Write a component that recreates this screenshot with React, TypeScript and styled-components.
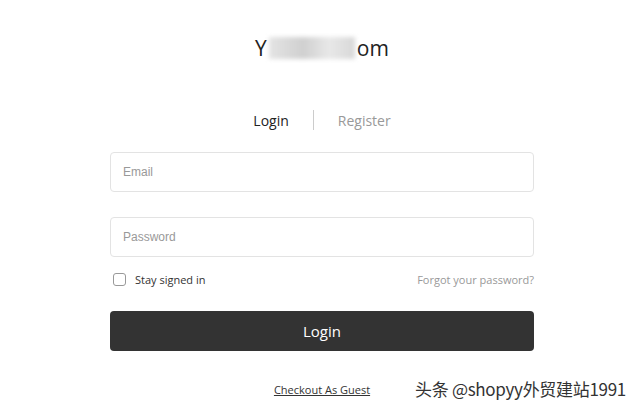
import React from "react";
import styled, { createGlobalStyle } from "styled-components";

const Global = createGlobalStyle`
  html, body { margin: 0; padding: 0; background: #fff; }
  body { font-family: "Open Sans", "Liberation Sans", sans-serif; color: #333; }
`;

const Page = styled.div`
  position: relative;
  width: 640px;
  height: 417px;
  overflow: hidden;
  display: flex;
  flex-direction: column;
  align-items: center;
  padding-left: 4px;
  box-sizing: border-box;
`;

const Title = styled.div`
  margin-top: 33px;
  height: 30px;
  display: flex;
  align-items: center;
  font-size: 21px;
  color: #222;
  font-family: "Open Sans", sans-serif;
`;

const Blur = styled.span`
  display: inline-block;
  width: 86px;
  height: 22px;
  margin: 0 2px;
  background: linear-gradient(90deg, #e4e4e4, #d0d0d0 40%, #e8e8e8 70%, #d8d8d8);
  filter: blur(2px);
`;

const Tabs = styled.div`
  margin-top: 46px;
  display: flex;
  align-items: center;
  height: 22px;
`;

const Tab = styled.span<{ $active?: boolean }>`
  font-size: 14px;
  color: ${(p) => (p.$active ? "#222" : "#999")};
`;

const Divider = styled.span`
  width: 1px;
  height: 20px;
  background: #ccc;
  margin: 0 24px;
`;

const Form = styled.div`
  width: 424px;
  margin-top: 21px;
  display: flex;
  flex-direction: column;
`;

const Input = styled.input`
  box-sizing: border-box;
  width: 100%;
  height: 40px;
  border: 1px solid #e3e3e3;
  border-radius: 4px;
  padding: 0 12px;
  font-family: "Liberation Sans", Arial, sans-serif;
  font-size: 12px;
  outline: none;
  & + & { margin-top: 25px; }
  &::placeholder { color: #999; }
`;

const Row = styled.div`
  margin-top: 14px;
  height: 16px;
  display: flex;
  justify-content: space-between;
  align-items: center;
  font-size: 11px;
`;

const Check = styled.label`
  display: flex;
  align-items: center;
  gap: 9px;
  color: #333;
  padding-left: 3px;
`;

const Box = styled.span`
  width: 11px;
  height: 11px;
  border: 1px solid #999;
  border-radius: 3px;
`;

const Forgot = styled.a`
  color: #999;
  text-decoration: none;
`;

const Button = styled.button`
  margin-top: 24px;
  height: 40px;
  border: none;
  border-radius: 4px;
  background: #333;
  color: #fff;
  font-family: "Open Sans", sans-serif;
  font-size: 15px;
`;

const Guest = styled.a`
  margin-top: 31px;
  font-size: 11px;
  color: #333;
  text-decoration: underline;
`;

const Watermark = styled.div`
  position: absolute;
  right: 14px;
  top: 376px;
  font-family: "Noto Sans CJK SC", sans-serif;
  font-size: 17px;
  color: #333;
  text-shadow: 0 0 2px #fff, 0 0 2px #fff;
  letter-spacing: -0.3px;
`;

export default function App() {
  return (
    <Page>
      <Global />
      <Title>
        Y<Blur />om
      </Title>
      <Tabs>
        <Tab $active>Login</Tab>
        <Divider />
        <Tab>Register</Tab>
      </Tabs>
      <Form>
        <Input placeholder="Email" />
        <Input placeholder="Password" type="password" />
        <Row>
          <Check>
            <Box />
            Stay signed in
          </Check>
          <Forgot>Forgot your password?</Forgot>
        </Row>
        <Button>Login</Button>
      </Form>
      <Guest>Checkout As Guest</Guest>
      <Watermark>头条 @shopyy外贸建站1991</Watermark>
    </Page>
  );
}
